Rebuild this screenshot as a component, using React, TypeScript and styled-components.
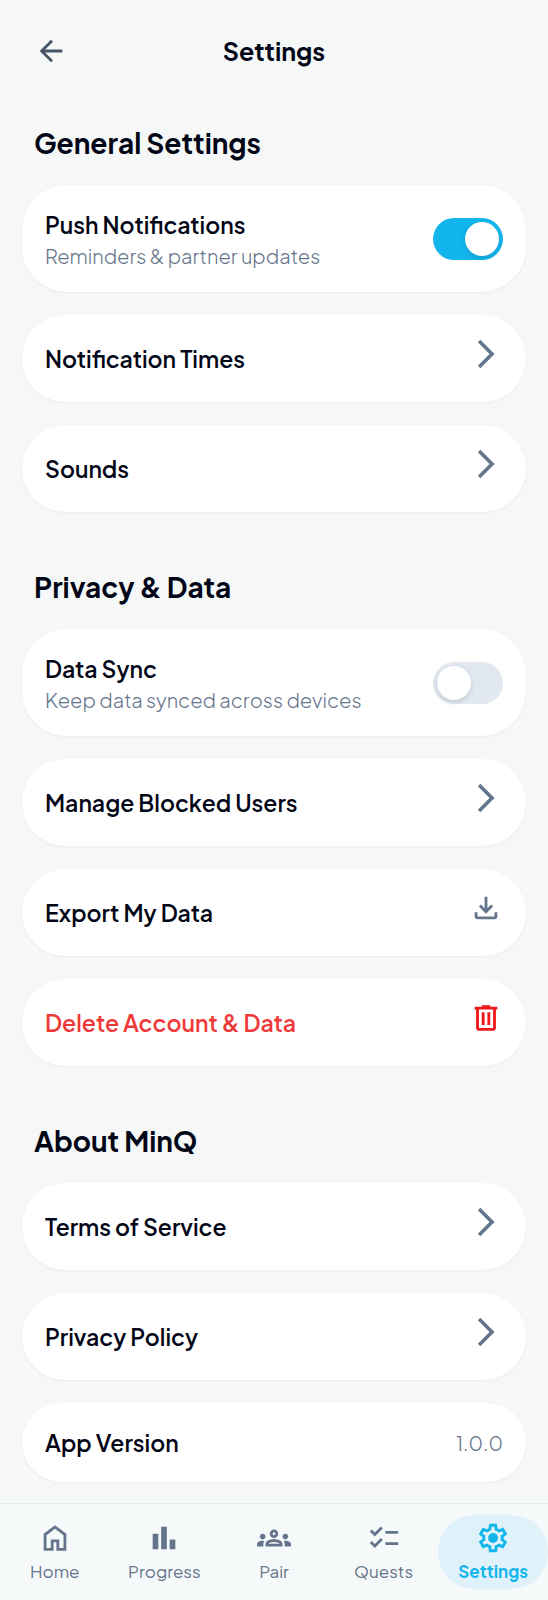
import React, { useState } from "react";
import styled, { createGlobalStyle } from "styled-components";

const color = {
  page: "#f6f8f7",
  card: "#ffffff",
  ink: "#020617",
  muted: "#64748b",
  back: "#475569",
  line: "#e2e8f0",
  track: "#e2e8f0",
  primary: "#13b6ec",
  primarySoft: "#e0f2f9",
  danger: "#ef3939",
  dangerIcon: "#f01818",
  nav: "#f6f9fa",
};

const GlobalStyle = createGlobalStyle`
  *, *::before, *::after { box-sizing: border-box; }
  body {
    margin: 0;
    background: ${color.page};
    color: ${color.ink};
    font-family: "Plus Jakarta Sans", Inter, "Liberation Sans", sans-serif;
  }
`;

const Page = styled.div`
  display: flex;
  flex-direction: column;
  min-height: 100vh;
`;

const Header = styled.header`
  display: grid;
  grid-template-columns: 56px 1fr 56px;
  align-items: center;
  padding: 23px;
`;

const BackButton = styled.button`
  display: grid;
  place-items: center;
  height: 56px;
  padding: 0;
  border: 0;
  border-radius: 28px;
  background: none;
  color: ${color.back};
  cursor: pointer;
`;

const Title = styled.h1`
  margin: 0;
  font-size: 25px;
  line-height: 34px;
  font-weight: 700;
  text-align: center;
`;

const Content = styled.main`
  flex: 1;
  display: flex;
  flex-direction: column;
  gap: 56px;
  padding: 22px 22px 21px;
`;

const Section = styled.section`
  display: flex;
  flex-direction: column;
  gap: 23px;
`;

const SectionTitle = styled.h2`
  margin: 0;
  padding: 0 12px;
  font-size: 28px;
  line-height: 38px;
  font-weight: 700;
`;

const Card = styled.div<{ $danger?: boolean }>`
  display: flex;
  align-items: center;
  justify-content: space-between;
  width: 100%;
  padding: 22px 23px;
  border: 0;
  border-radius: 45px;
  background: ${color.card};
  box-shadow: 0 1px 3px rgba(15, 23, 42, 0.05);
  color: ${(p) => (p.$danger ? color.danger : color.ink)};
  font-family: inherit;
  text-align: left;
  text-decoration: none;
`;

const Label = styled.span`
  display: block;
  font-size: 23px;
  line-height: 35px;
  font-weight: 600;
`;

const Detail = styled.span`
  display: block;
  color: ${color.muted};
  font-size: 20px;
  line-height: 28px;
  font-weight: 300;
`;

const Trailing = styled.span<{ $danger?: boolean }>`
  display: flex;
  align-items: flex-start;
  height: 43px;
  color: ${(p) => (p.$danger ? color.dangerIcon : color.muted)};
`;

const Switch = styled.input`
  appearance: none;
  flex: none;
  width: 70px;
  height: 42px;
  margin: 0;
  padding: 4px;
  border-radius: 21px;
  background: ${color.track};
  cursor: pointer;

  &::before {
    content: "";
    display: block;
    width: 34px;
    height: 34px;
    border-radius: 50%;
    background: ${color.card};
    box-shadow: 0 2px 5px rgba(15, 23, 42, 0.16);
  }

  &:checked {
    background: ${color.primary};
  }

  &:checked::before {
    margin-left: auto;
  }
`;

const NavBar = styled.nav`
  position: sticky;
  bottom: 0;
  display: grid;
  grid-template-columns: repeat(5, 1fr);
  padding: 11px 0;
  border-top: 1px solid ${color.line};
  background: ${color.nav};
`;

const NavLink = styled.a<{ $active?: boolean }>`
  display: flex;
  flex-direction: column;
  align-items: center;
  gap: 4px;
  padding: 6px 0;
  border-radius: 36px;
  background: ${(p) => (p.$active ? color.primarySoft : "transparent")};
  color: ${(p) => (p.$active ? color.primary : color.muted)};
  font-size: 17px;
  line-height: 24px;
  font-weight: ${(p) => (p.$active ? 700 : 400)};
  text-decoration: none;
`;

const Glyph = styled.svg`
  display: block;
  width: 34px;
  height: 34px;
  fill: currentColor;
`;

const icons = {
  back: "m313-440 224 224-57 56-320-320 320-320 57 56-224 224h487v80H313Z",
  forward: "m321-80-71-71 329-329-329-329 71-71 400 400L321-80Z",
  download:
    "M480-320 280-520l56-58 104 104v-326h80v326l104-104 56 58-200 200ZM240-160q-33 0-56.5-23.5T160-240v-120h80v120h480v-120h80v120q0 33-23.5 56.5T720-160H240Z",
  trash:
    "M280-120q-33 0-56.5-23.5T200-200v-520h-40v-80h200v-40h240v40h200v80h-40v520q0 33-23.5 56.5T680-120H280Zm400-600H280v520h400v-520ZM360-280h80v-360h-80v360Zm160 0h80v-360h-80v360Z",
  home: "M240-200h120v-240h240v240h120v-360L480-740 240-560v360Zm-80 80v-480l320-240 320 240v480H520v-240h-80v240H160Z",
  chart: "M640-160v-280h160v280H640Zm-240 0v-640h160v640H400Zm-240 0v-440h160v440H160Z",
  groups:
    "M0-240v-63q0-43 44-70t116-27q13 0 25 .5t23 2.5q-14 21-21 44t-7 48v65H0Zm240 0v-65q0-32 17.5-58.5T307-410q32-20 76.5-30t96.5-10q53 0 97.5 10t76.5 30q32 20 49 46.5t17 58.5v65H240Zm540 0v-65q0-26-6.5-49T754-397q11-2 22.5-2.5t23.5-.5q72 0 116 26.5t44 70.5v63H780Zm-455-80h311q-10-20-55.5-35T480-370q-55 0-100.5 15T325-320ZM160-440q-33 0-56.5-23.5T80-520q0-34 23.5-57t56.5-23q34 0 57 23t23 57q0 33-23 56.5T160-440Zm640 0q-33 0-56.5-23.5T720-520q0-34 23.5-57t56.5-23q34 0 57 23t23 57q0 33-23 56.5T800-440Zm-320-40q-50 0-85-35t-35-85q0-51 35-85.5t85-34.5q51 0 85.5 34.5T600-600q0 50-34.5 85T480-480Zm0-80q17 0 28.5-11.5T520-600q0-17-11.5-28.5T480-640q-17 0-28.5 11.5T440-600q0 17 11.5 28.5T480-560Z",
  checklist:
    "M222-200 80-342l56-56 85 85 170-170 56 57-225 226Zm0-320L80-662l56-56 85 85 170-170 56 57-225 226Zm298 240v-80h360v80H520Zm0-320v-80h360v80H520Z",
  settings:
    "m370-80-16-128q-13-5-24.5-12T307-235l-119 50L78-375l103-78q-1-7-1-13.5v-27q0-6.5 1-13.5L78-585l110-190 119 50q11-8 23-15t24-12l16-128h220l16 128q13 5 24.5 12t22.5 15l119-50 110 190-103 78q1 7 1 13.5v27q0 6.5-2 13.5l103 78-110 190-118-50q-11 8-23 15t-24 12L590-80H370Zm70-80h79l14-106q31-8 57.5-23.5T639-327l99 41 39-68-86-65q5-14 7-29.5t2-31.5q0-16-2-31.5t-7-29.5l86-65-39-68-99 42q-22-23-48.5-38.5T533-694l-13-106h-79l-14 106q-31 8-57.5 23.5T321-633l-99-41-39 68 86 64q-5 15-7 30t-2 32q0 16 2 31t7 30l-86 65 39 68 99-42q22 23 48.5 38.5T427-266l13 106Zm42-180q58 0 99-41t41-99q0-58-41-99t-99-41q-59 0-99.5 41T342-480q0 58 40.5 99t99.5 41Z",
};

type IconName = keyof typeof icons;

const Icon = ({ name }: { name: IconName }) => (
  <Glyph viewBox="0 -960 960 960" aria-hidden="true">
    <path d={icons[name]} />
  </Glyph>
);

type SwitchRowProps = { id: string; label: string; detail: string; initial: boolean };

const SwitchRow = ({ id, label, detail, initial }: SwitchRowProps) => {
  const [on, setOn] = useState(initial);
  return (
    <Card as="label" htmlFor={id}>
      <span>
        <Label>{label}</Label>
        <Detail>{detail}</Detail>
      </span>
      <Switch
        id={id}
        type="checkbox"
        role="switch"
        checked={on}
        onChange={(e) => setOn(e.target.checked)}
      />
    </Card>
  );
};

type RowProps = { label: string; icon?: IconName; danger?: boolean };

const ActionRow = ({ label, icon = "forward", danger }: RowProps) => (
  <Card as="button" type="button" $danger={danger}>
    <Label>{label}</Label>
    <Trailing $danger={danger}>
      <Icon name={icon} />
    </Trailing>
  </Card>
);

const LinkRow = ({ label, href }: { label: string; href: string }) => (
  <Card as="a" href={href}>
    <Label>{label}</Label>
    <Trailing>
      <Icon name="forward" />
    </Trailing>
  </Card>
);

const tabs: { label: string; icon: IconName; active?: boolean }[] = [
  { label: "Home", icon: "home" },
  { label: "Progress", icon: "chart" },
  { label: "Pair", icon: "groups" },
  { label: "Quests", icon: "checklist" },
  { label: "Settings", icon: "settings", active: true },
];

export default function App() {
  return (
    <>
      <GlobalStyle />
      <Page>
        <Header>
          <BackButton type="button" aria-label="Back">
            <Icon name="back" />
          </BackButton>
          <Title>Settings</Title>
        </Header>

        <Content>
          <Section>
            <SectionTitle>General Settings</SectionTitle>
            <SwitchRow
              id="push"
              label="Push Notifications"
              detail="Reminders & partner updates"
              initial={true}
            />
            <ActionRow label="Notification Times" />
            <ActionRow label="Sounds" />
          </Section>

          <Section>
            <SectionTitle>Privacy &amp; Data</SectionTitle>
            <SwitchRow
              id="sync"
              label="Data Sync"
              detail="Keep data synced across devices"
              initial={false}
            />
            <ActionRow label="Manage Blocked Users" />
            <ActionRow label="Export My Data" icon="download" />
            <ActionRow label="Delete Account & Data" icon="trash" danger />
          </Section>

          <Section>
            <SectionTitle>About MinQ</SectionTitle>
            <LinkRow label="Terms of Service" href="#terms" />
            <LinkRow label="Privacy Policy" href="#privacy" />
            <Card>
              <Label>App Version</Label>
              <Detail>1.0.0</Detail>
            </Card>
          </Section>
        </Content>

        <NavBar aria-label="Main">
          {tabs.map((tab) => (
            <NavLink
              key={tab.label}
              href={`#${tab.label.toLowerCase()}`}
              $active={tab.active}
              aria-current={tab.active ? "page" : undefined}
            >
              <Icon name={tab.icon} />
              {tab.label}
            </NavLink>
          ))}
        </NavBar>
      </Page>
    </>
  );
}
